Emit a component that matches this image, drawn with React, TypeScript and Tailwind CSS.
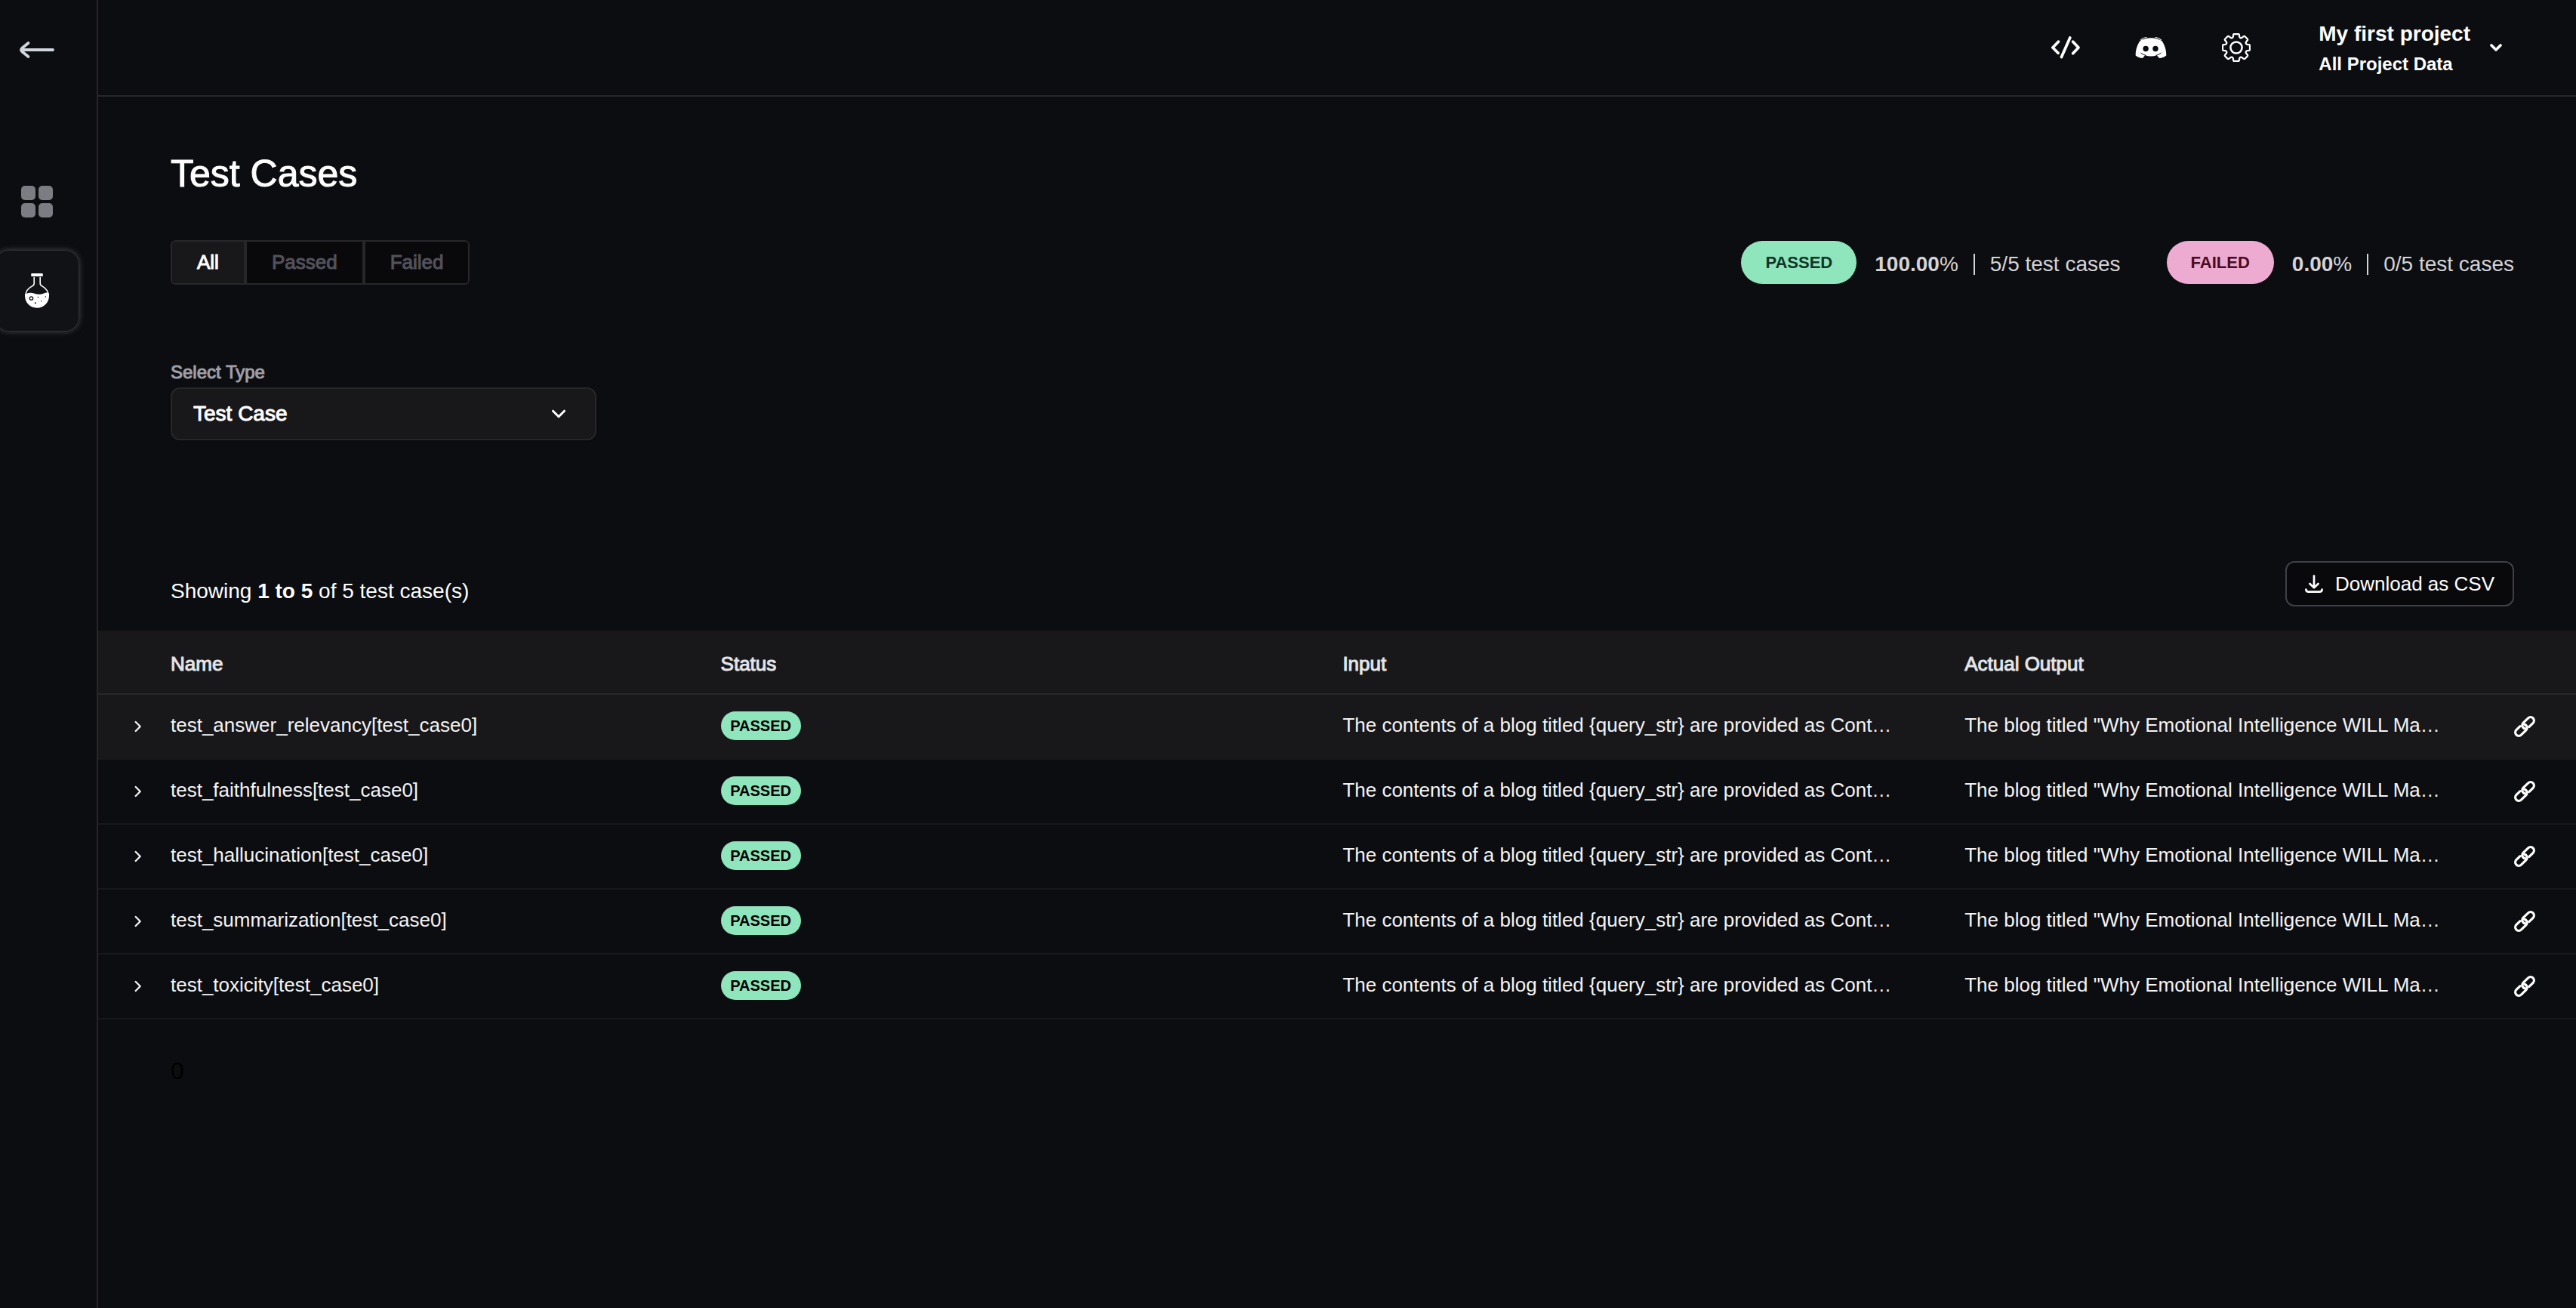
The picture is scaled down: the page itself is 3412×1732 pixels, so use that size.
import type { ReactNode } from "react";

const MEDIUM = "[-webkit-text-stroke:1px_currentColor]";

/* ---------- icons ---------- */

function ArrowLeftIcon() {
  return (
    <svg viewBox="0 0 48 24" className="h-6 w-12" fill="none" stroke="currentColor" strokeWidth="3.8" strokeLinecap="round" strokeLinejoin="round" aria-hidden="true">
      <path d="M45 12H3M12.500 3 4.500 9.500Q1.500 12 4.500 14.500L12.500 21" />
    </svg>
  );
}

function GridIcon() {
  return (
    <svg viewBox="0 0 42 42" className="size-[42px]" fill="currentColor" aria-hidden="true">
      <rect width="19" height="19" rx="5" />
      <rect x="23" width="19" height="19" rx="5" />
      <rect y="23" width="19" height="19" rx="5" />
      <rect x="23" y="23" width="19" height="19" rx="5" />
    </svg>
  );
}

function FlaskIcon() {
  return (
    <svg viewBox="0 0 32 46" className="h-[46px] w-8" aria-hidden="true">
      <rect x="8.2" y="0" width="15.6" height="4" rx="1" fill="#fff" />
      <path d="M12.2 5v8.5c0 1.6-1 2.6-3 3.6C4.500 19.600 1.200 23.800.9 29c0 .8.1 1 .1 1M20.200 5v8.500c0 1.600 1 2.600 3 3.600C27.500 19.600 30.800 23.800 31.100 29v1" fill="none" stroke="#fff" strokeWidth="1.6" />
      <path d="M.1 27.500C4 26 8 25.200 12 26.400c4.500 1.500 9 1.800 13 .1 2.500-1 4.800-1.200 6.600-.4.300 1.200.4 2.400.4 3.600C32 38.500 25 45.700 16 45.700S0 38.500 0 30c0-.9 0-1.700.1-2.500z" fill="#fff" />
      <circle cx="8.500" cy="33" r="2.200" fill="none" stroke="#111216" strokeWidth="1.300" />
      <circle cx="17.500" cy="31.500" r=".8" fill="#111216" />
      <circle cx="27.300" cy="31" r=".8" fill="#111216" />
      <circle cx="21.800" cy="36.700" r=".8" fill="#111216" />
      <circle cx="13.800" cy="39.300" r="1" fill="#111216" />
    </svg>
  );
}

function CodeIcon() {
  return (
    <svg viewBox="0 0 38 30" className="h-[30px] w-[38px]" fill="none" stroke="currentColor" strokeWidth="3.700" strokeLinecap="round" strokeLinejoin="round" aria-hidden="true">
      <path d="M9.400 7.200 1.900 15l7.200 7.300M28.700 7.200 36 15l-7.300 7.700M24.800 1.900 13.500 27.600" />
    </svg>
  );
}

function DiscordIcon() {
  return (
    <svg viewBox="0 0 42 28" className="h-7 w-[42px]" aria-hidden="true">
      <path d="M7.500 3.800C9.600 1.700 12.300.8 15 .5M34.500 3.800C32.400 1.700 29.700.8 27 .5" fill="none" stroke="#fff" strokeWidth="1.100" strokeLinecap="round" />
      <path d="M12.300 2.700Q21 0 29.700 2.700 33.800 3.500 35.800 5.600C39 10.500 41.500 17 41.300 24.500 38.500 26.800 35.500 27.900 32 27.900L28.800 24.300Q21 26.800 13.200 24.300L10 27.900C6.500 27.900 3.500 26.800.7 24.500.5 17 3 10.500 6.200 5.600 8.200 3.500 12.300 2.700 12.300 2.700z" fill="#fff" />
      <path d="M7.800 21.300Q10 23.200 14 24.400M34.200 21.300Q32 23.200 28 24.400" fill="none" stroke="#0c0d10" strokeWidth="1" strokeLinecap="round" />
      <circle cx="14.100" cy="15.500" r="3.700" fill="#0c0d10" />
      <circle cx="27" cy="15.500" r="3.700" fill="#0c0d10" />
    </svg>
  );
}

function GearIcon() {
  return (
    <svg viewBox="-19 -19 38 38" className="size-[38px]" fill="none" stroke="currentColor" strokeWidth="2.300" strokeLinejoin="round" aria-hidden="true">
      <circle r="7.600" strokeWidth="2.500" />
      <path d="M-2.600-18H2.600Q3.700-18 3.900-16.900L4.200-14.400Q4.400-13.300 5.400-12.900 6.600-12.400 7.500-13.100L9.800-14.900Q10.700-15.500 11.500-14.700L14.700-11.500Q15.500-10.700 14.900-9.800L13.100-7.500Q12.400-6.600 12.900-5.400 13.300-4.400 14.400-4.200L16.900-3.900Q18-3.700 18-2.600V2.600Q18 3.700 16.900 3.900L14.400 4.200Q13.300 4.400 12.900 5.400 12.400 6.600 13.100 7.500L14.900 9.800Q15.500 10.700 14.700 11.500L11.500 14.700Q10.700 15.500 9.800 14.900L7.500 13.100Q6.600 12.400 5.400 12.900 4.400 13.300 4.200 14.400L3.900 16.900Q3.700 18 2.600 18H-2.600Q-3.700 18-3.900 16.900L-4.200 14.400Q-4.400 13.300-5.400 12.900-6.600 12.400-7.500 13.100L-9.800 14.900Q-10.700 15.500-11.500 14.700L-14.700 11.500Q-15.500 10.700-14.900 9.800L-13.100 7.500Q-12.400 6.600-12.900 5.400-13.300 4.400-14.400 4.200L-16.900 3.900Q-18 3.700-18 2.600V-2.600Q-18-3.700-16.900-3.900L-14.400-4.200Q-13.300-4.400-12.900-5.400-12.400-6.600-13.100-7.500L-14.900-9.800Q-15.500-10.700-14.700-11.500L-11.500-14.700Q-10.700-15.500-9.800-14.900L-7.500-13.100Q-6.600-12.400-5.400-12.900-4.400-13.300-4.200-14.400L-3.900-16.900Q-3.700-18-2.600-18z" />
    </svg>
  );
}

function ChevronDownIcon({ className, weight }: { className: string; weight: number }) {
  return (
    <svg viewBox="0 0 20 12" className={className} fill="none" stroke="currentColor" strokeWidth={weight} strokeLinecap="round" strokeLinejoin="round" aria-hidden="true">
      <path d="M2.500 2.200 10 9.700l7.500-7.500" />
    </svg>
  );
}

function ChevronRightIcon() {
  return (
    <svg viewBox="0 0 10 16" className="h-4 w-2.5" fill="none" stroke="currentColor" strokeWidth="2.300" strokeLinecap="round" strokeLinejoin="round" aria-hidden="true">
      <path d="M1.700 2 7.700 8l-6 6" />
    </svg>
  );
}

function DownloadIcon() {
  return (
    <svg viewBox="0 0 24 24" className="size-6" fill="none" stroke="currentColor" strokeWidth="2.700" strokeLinecap="round" strokeLinejoin="round" aria-hidden="true">
      <path d="M12 1.500v15.700M6.500 12 12 17.400 17.500 12M1.400 19.500c0 2.100 1.100 3.100 3.100 3.100h15c2 0 3.100-1 3.100-3.100" />
    </svg>
  );
}

function LinkIcon() {
  return (
    <svg viewBox="0 0 28 28" className="size-7" fill="none" stroke="currentColor" strokeWidth="3.200" strokeLinecap="round" aria-hidden="true">
      <path d="M14.600 16.900A4.600 4.600 0 0 1 12.150 9.150L18.650 2.850A4.600 4.600 0 0 1 25.150 9.350L20 14.300" />
      <path d="M13.400 11.100A4.600 4.600 0 0 1 15.850 18.850L9.350 25.150A4.600 4.600 0 0 1 2.850 18.650L8 13.700" />
    </svg>
  );
}

/* ---------- data ---------- */

const cases = [
  "test_answer_relevancy[test_case0]",
  "test_faithfulness[test_case0]",
  "test_hallucination[test_case0]",
  "test_summarization[test_case0]",
  "test_toxicity[test_case0]",
];

const tabs = ["All", "Passed", "Failed"];

/* ---------- pieces ---------- */

function Summary({ label, tone, percent, count }: { label: string; tone: string; percent: string; count: string }) {
  return (
    <div className="flex items-center gap-6 text-[28px] text-zinc-300">
      <span className={`flex h-[57px] items-center rounded-full px-8 text-[22px] font-bold ${tone}`}>{label}</span>
      <div className="flex items-center gap-5 pt-1">
        <span><b>{percent}</b>%</span>
        <span className="h-7 w-0.5 bg-zinc-300" />
        <span>{count} test cases</span>
      </div>
    </div>
  );
}

function HeadCell({ children }: { children: ReactNode }) {
  return <th scope="col" className={`pt-1 text-left font-normal ${MEDIUM}`}>{children}</th>;
}

export default function App() {
  return (
    <div className="flex min-h-screen bg-[#0c0d10] font-['Liberation_Sans',Arial,sans-serif] text-white">
      <nav aria-label="Main" className="flex w-[130px] shrink-0 flex-col border-r-2 border-zinc-800">
        <button type="button" aria-label="Back" className="mt-[54px] ml-[25px] self-start text-gray-300">
          <ArrowLeftIcon />
        </button>
        <a href="#dashboard" aria-label="Dashboard" className="mt-[168px] ml-7 self-start text-[#7c7d82]">
          <GridIcon />
        </a>
        <a href="#test-cases" aria-label="Test cases" aria-current="page" className="mt-11 -ml-1.5 flex h-[106px] w-[110px] items-center rounded-[18px] bg-[#111216] pl-[39px] shadow-[0_0_8px_#55555a]">
          <FlaskIcon />
        </a>
      </nav>

      <div className="flex min-w-0 flex-1 flex-col">
        <header className="flex h-32 items-center justify-end border-b-2 border-zinc-800 pr-[98px]">
          <div className="flex items-center gap-[73px]">
            <button type="button" aria-label="API"><CodeIcon /></button>
            <button type="button" aria-label="Discord"><DiscordIcon /></button>
            <button type="button" aria-label="Settings"><GearIcon /></button>
          </div>
          <button type="button" className="ml-[90px] flex items-center gap-[26px] text-left font-bold">
            <span className="flex flex-col pt-1">
              <span className="text-[28px] leading-10">My first project</span>
              <span className="text-2xl leading-10">All Project Data</span>
            </span>
            <ChevronDownIcon className="h-2.5 w-4" weight={4.5} />
          </button>
        </header>

        <main>
          <div className="pr-[82px] pl-24">
            <h1 className={`pt-[74px] text-[50px] leading-[56px] ${MEDIUM}`}>Test Cases</h1>

            <div className="mt-[60px] flex items-center justify-between">
              <div className={`flex overflow-hidden rounded-md text-[26px] ${MEDIUM}`}>
                {tabs.map((tab, i) => (
                  <button
                    key={tab}
                    type="button"
                    aria-pressed={i === 0}
                    className={`h-[59px] border-2 border-zinc-800 px-[33px] first:rounded-l-md last:rounded-r-md ${i === 0 ? "bg-[#18181b] text-white" : "bg-zinc-950 text-zinc-600"}`}
                  >
                    {tab}
                  </button>
                ))}
              </div>
              <div className="flex items-center gap-[61px]">
                <Summary label="PASSED" tone="bg-[#8fe5bc] text-[#123527]" percent="100.00" count="5/5" />
                <Summary label="FAILED" tone="bg-[#edabd1] text-[#4a0c1f]" percent="0.00" count="0/5" />
              </div>
            </div>

            <label htmlFor="type" className={`mt-[100px] block text-2xl leading-8 text-zinc-400 ${MEDIUM}`}>Select Type</label>
            <div className="mt-1 grid w-[564px] items-center">
              <select id="type" className={`col-start-1 row-start-1 h-[70px] appearance-none rounded-xl border-2 border-zinc-800 bg-[#18181b] px-7 text-[28px] text-white shadow-sm ${MEDIUM}`}>
                <option>Test Case</option>
              </select>
              <ChevronDownIcon className="pointer-events-none col-start-1 row-start-1 mr-10 h-3 w-5 justify-self-end" weight={3} />
            </div>

            <div className="mt-40 flex items-start justify-between">
              <p className="mt-6 text-[28px] leading-8">
                Showing <b>1 to 5</b> of 5 test case(s)
              </p>
              <button type="button" className="flex h-[60px] items-center gap-4 rounded-xl border-2 border-zinc-700 bg-zinc-950 px-6 text-[26px]">
                <DownloadIcon />
                Download as CSV
              </button>
            </div>
          </div>

          <table className="mt-8 w-full table-fixed border-collapse text-[26px] leading-8">
            <colgroup>
              <col className="w-24" />
              <col className="w-[22.2%]" />
              <col className="w-[25.1%]" />
              <col className="w-[25.1%]" />
              <col />
              <col className="w-[82px]" />
            </colgroup>
            <thead>
              <tr className="h-[84px] border-b-2 border-zinc-800 bg-[#18181b] text-zinc-200">
                <td />
                <HeadCell>Name</HeadCell>
                <HeadCell>Status</HeadCell>
                <HeadCell>Input</HeadCell>
                <HeadCell>Actual Output</HeadCell>
                <td />
              </tr>
            </thead>
            <tbody>
              {cases.map((name, i) => (
                <tr key={name} className={`h-[86px] border-b-2 border-[#18181b] text-zinc-100 ${i === 0 ? "bg-[#18181b]" : ""}`}>
                  <td>
                    <button type="button" aria-label={`Expand ${name}`} className="ml-12 block"><ChevronRightIcon /></button>
                  </td>
                  <td className="truncate pb-1">{name}</td>
                  <td className="pb-0.5">
                    <span className="flex h-[38px] w-[106px] items-center justify-center rounded-full bg-[#8fe5bc] text-xl font-bold text-black">PASSED</span>
                  </td>
                  <td className="truncate pb-1">The contents of a blog titled {"{query_str}"} are provided as Cont…</td>
                  <td className="truncate pb-1">The blog titled "Why Emotional Intelligence WILL Ma…</td>
                  <td>
                    <a href="#link" aria-label={`Link to ${name}`} className="block w-7 text-white"><LinkIcon /></a>
                  </td>
                </tr>
              ))}
            </tbody>
          </table>
          <p className="mt-11 pl-24 text-[32px] leading-[48px] text-black">0</p>
        </main>
      </div>
    </div>
  );
}
